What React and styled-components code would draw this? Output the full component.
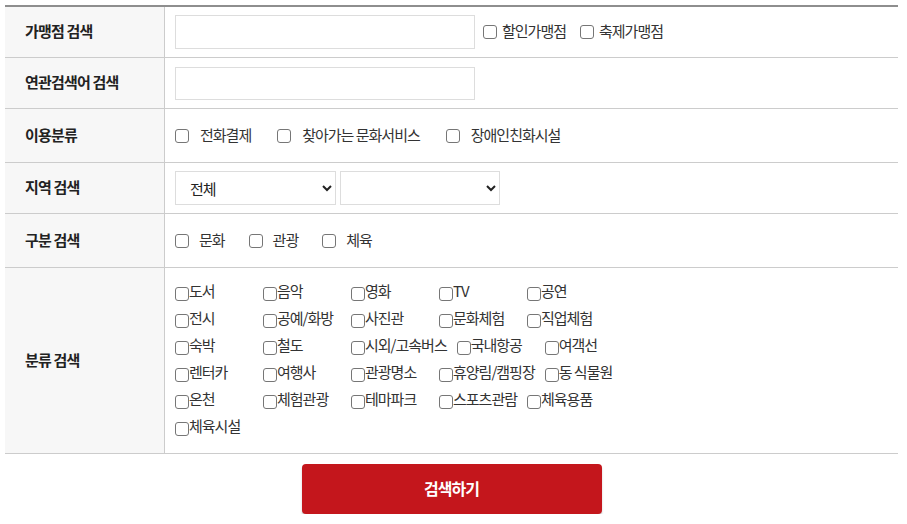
import React from "react";
import styled, { createGlobalStyle } from "styled-components";

const Global = createGlobalStyle`
  html, body { margin: 0; padding: 0; background: #fff; }
  body {
    font-family: "Noto Sans CJK KR", "Noto Sans", sans-serif;
    color: #333;
    font-size: 15px;
  }
`;

const Page = styled.div`
  padding: 5px 9px 0 5px;
  width: 893px;
`;

const Table = styled.div`
  border-top: 2px solid #8e8e8e;
  display: flex;
  flex-direction: column;
`;

const Row = styled.div`
  display: grid;
  grid-template-columns: 160px 1fr;
  border-bottom: 1px solid #cccccc;
  min-height: ${(p) => p.$h}px;
`;

const Th = styled.div`
  background: #f7f7f7;
  border-right: 1px solid #cccccc;
  display: flex;
  align-items: center;
  padding: 0 0 3px 20px;
  font-weight: 700;
  font-size: 15px;
  letter-spacing: -0.8px;
  color: #222;
`;

const Td = styled.div`
  display: flex;
  align-items: center;
  padding: ${(p) => p.$pad || "0 10px"};
  gap: ${(p) => p.$gap || 0}px;
`;

const TextInput = styled.input`
  box-sizing: border-box;
  width: 300px;
  height: ${(p) => p.$h || 34}px;
  border: 1px solid #dddddd;
  margin: 0;
  padding: 0 8px;
  outline: none;
`;

const Select = styled.select`
  box-sizing: border-box;
  width: ${(p) => p.$w}px;
  height: 34px;
  border: 1px solid #dddddd;
  background: #fff;
  margin: 0;
  padding: 0 0 0 10px;
  font-family: "Noto Sans CJK KR", sans-serif;
  font-size: 15px;
  letter-spacing: -1px;
  color: #222;
`;

const CheckGroup = styled.div`
  display: flex;
  align-items: center;
  gap: ${(p) => p.$gap}px;
`;

const Check = styled.label`
  display: inline-flex;
  align-items: center;
  gap: ${(p) => p.$gap}px;
  font-size: 15px;
  letter-spacing: -1px;
  color: #333;
  white-space: nowrap;
`;

const Txt = styled.span`
  margin-bottom: ${(p) => p.$raise * 2}px;
`;

const Box = styled.input.attrs({ type: "checkbox" })`
  appearance: none;
  -webkit-appearance: none;
  box-sizing: border-box;
  width: 14px;
  height: 14px;
  margin: 0;
  flex: none;
  border: 1px solid #767676;
  border-radius: 3px;
  background: #fff;
`;

const Grid = styled.div`
  display: flex;
  flex-wrap: wrap;
  align-content: flex-start;
  width: 100%;
`;

const GridItem = styled.label`
  box-sizing: border-box;
  min-width: 88px;
  padding-right: 10px;
  height: 27px;
  display: inline-flex;
  align-items: center;
  gap: 0;
  font-size: 15px;
  letter-spacing: -1px;
  color: #333;
  white-space: nowrap;
`;

const LineBreak = styled.div`
  flex-basis: 100%;
  height: 0;
`;

const Footer = styled.div`
  display: flex;
  justify-content: center;
  padding-top: 10px;
`;

const Button = styled.button`
  width: 300px;
  height: 50px;
  border: none;
  border-radius: 4px;
  background: #c4161c;
  color: #fff;
  font-family: "Noto Sans CJK KR", sans-serif;
  font-weight: 700;
  font-size: 16px;
  letter-spacing: -1px;
  padding: 0 0 3px;
  box-shadow: 0 2px 2px rgba(0, 0, 0, 0.22);
  cursor: pointer;
`;

const gridRows = [
  ["도서", "음악", "영화", "TV", "공연"],
  ["전시", "공예/화방", "사진관", "문화체험", "직업체험"],
  ["숙박", "철도", "시외/고속버스", "국내항공", "여객선"],
  ["렌터카", "여행사", "관광명소", "휴양림/캠핑장", "동 식물원"],
  ["온천", "체험관광", "테마파크", "스포츠관람", "체육용품"],
  ["체육시설"],
];

export default function App() {
  return (
    <Page>
      <Global />
      <Table>
        <Row $h={50}>
          <Th>가맹점 검색</Th>
          <Td $gap={8}>
            <TextInput $h={34} />
            <CheckGroup $gap={14}>
              <Check $gap={5}><Box /><Txt $raise={2}>할인가맹점</Txt></Check>
              <Check $gap={5}><Box /><Txt $raise={2}>축제가맹점</Txt></Check>
            </CheckGroup>
          </Td>
        </Row>
        <Row $h={50}>
          <Th>연관검색어 검색</Th>
          <Td>
            <TextInput $h={33} />
          </Td>
        </Row>
        <Row $h={53}>
          <Th>이용분류</Th>
          <Td>
            <CheckGroup $gap={26}>
              <Check $gap={11}><Box /><Txt $raise={1}>전화결제</Txt></Check>
              <Check $gap={11}><Box /><Txt $raise={1}>찾아가는 문화서비스</Txt></Check>
              <Check $gap={11}><Box /><Txt $raise={1}>장애인친화시설</Txt></Check>
            </CheckGroup>
          </Td>
        </Row>
        <Row $h={50}>
          <Th>지역 검색</Th>
          <Td $gap={4}>
            <Select $w={161} defaultValue="전체">
              <option>전체</option>
            </Select>
            <Select $w={160} defaultValue="">
              <option value=""></option>
            </Select>
          </Td>
        </Row>
        <Row $h={53}>
          <Th>구분 검색</Th>
          <Td>
            <CheckGroup $gap={24}>
              <Check $gap={10}><Box /><Txt $raise={1}>문화</Txt></Check>
              <Check $gap={10}><Box /><Txt $raise={1}>관광</Txt></Check>
              <Check $gap={10}><Box /><Txt $raise={1}>체육</Txt></Check>
            </CheckGroup>
          </Td>
        </Row>
        <Row $h={184}>
          <Th>분류 검색</Th>
          <Td $pad="12px 10px 11px">
            <Grid>
              {gridRows.map((row, i) => (
                <React.Fragment key={i}>
                  {row.map((t) => (
                    <GridItem key={t}>
                      <Box />
                      <Txt $raise={3}>{t}</Txt>
                    </GridItem>
                  ))}
                  {i < gridRows.length - 1 && <LineBreak />}
                </React.Fragment>
              ))}
            </Grid>
          </Td>
        </Row>
      </Table>
      <Footer>
        <Button>검색하기</Button>
      </Footer>
    </Page>
  );
}
